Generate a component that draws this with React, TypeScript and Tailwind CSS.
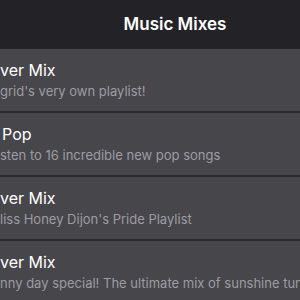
const mixes = [
  { title: "ver Mix", subtitle: "grid's very own playlist!", indent: "pl-0" },
  { title: "Pop", subtitle: "sten to 16 incredible new pop songs", indent: "pl-[2px]" },
  { title: "ver Mix", subtitle: "liss Honey Dijon's Pride Playlist", indent: "pl-0" },
  { title: "ver Mix", subtitle: "nny day special! The ultimate mix of sunshine tunes", indent: "pl-0" },
];

export default function App() {
  return (
    <div className="w-[300px] h-[300px] overflow-hidden bg-[#2b2a2f] font-['Inter',sans-serif]">
      <header className="h-[49px] bg-[#232327] overflow-hidden">
        <div className="w-[350px] h-full flex items-center justify-center">
          <h1 className="text-[17px] font-semibold text-white leading-none">
            Music Mixes
          </h1>
        </div>
      </header>

      <ul className="flex flex-col gap-[2px]">
        {mixes.map((mix, i) => (
          <li key={i} className="h-[62px] bg-[#47464b] pt-[11px] whitespace-nowrap">
            <p className={`text-[16px] leading-[20px] text-white ${mix.indent}`}>{mix.title}</p>
            <p className="mt-[2px] text-[13px] leading-[18px] text-[#9d9ca2]">{mix.subtitle}</p>
          </li>
        ))}
      </ul>
    </div>
  );
}
